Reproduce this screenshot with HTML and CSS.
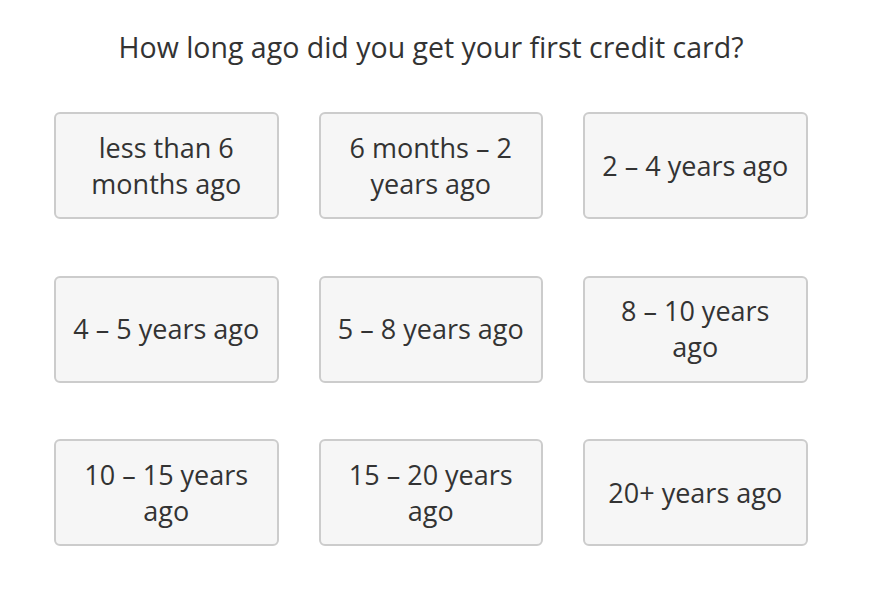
FILE: index.html
```html
<!DOCTYPE html>
<html>
<head>
<meta charset="utf-8">
<link rel="stylesheet" href="styles.css">
</head>
<body>
<div class="wrap">
  <h1 class="title">How long ago did you get your first credit card?</h1>
  <div class="grid">
    <div class="opt">less than 6 months ago</div>
    <div class="opt">6 months – 2 years ago</div>
    <div class="opt">2 – 4 years ago</div>
    <div class="opt">4 – 5 years ago</div>
    <div class="opt">5 – 8 years ago</div>
    <div class="opt">8 – 10 years ago</div>
    <div class="opt">10 – 15 years ago</div>
    <div class="opt">15 – 20 years ago</div>
    <div class="opt">20+ years ago</div>
  </div>
</div>
</body>
</html>
```
FILE: styles.css
```css
html, body {
  margin: 0;
  padding: 0;
  background: #ffffff;
}
body {
  font-family: "Open Sans", "Noto Sans", sans-serif;
  color: #333333;
}
.wrap {
  width: 754px;
  margin-left: 54px;
  padding-top: 27px;
}
.title {
  margin: 0;
  font-size: 28.5px;
  font-weight: 400;
  line-height: 40px;
  text-align: center;
  color: #333333;
}
.grid {
  margin-top: 45px;
  display: grid;
  grid-template-columns: repeat(3, 224.5px);
  column-gap: 40px;
  row-gap: 56.5px;
}
.opt {
  box-sizing: border-box;
  height: 107px;
  border: 2px solid #cccccc;
  border-radius: 6px;
  background: #f6f6f6;
  display: flex;
  align-items: center;
  justify-content: center;
  text-align: center;
  padding: 0 12px;
  font-size: 27px;
  line-height: 36px;
}
```
